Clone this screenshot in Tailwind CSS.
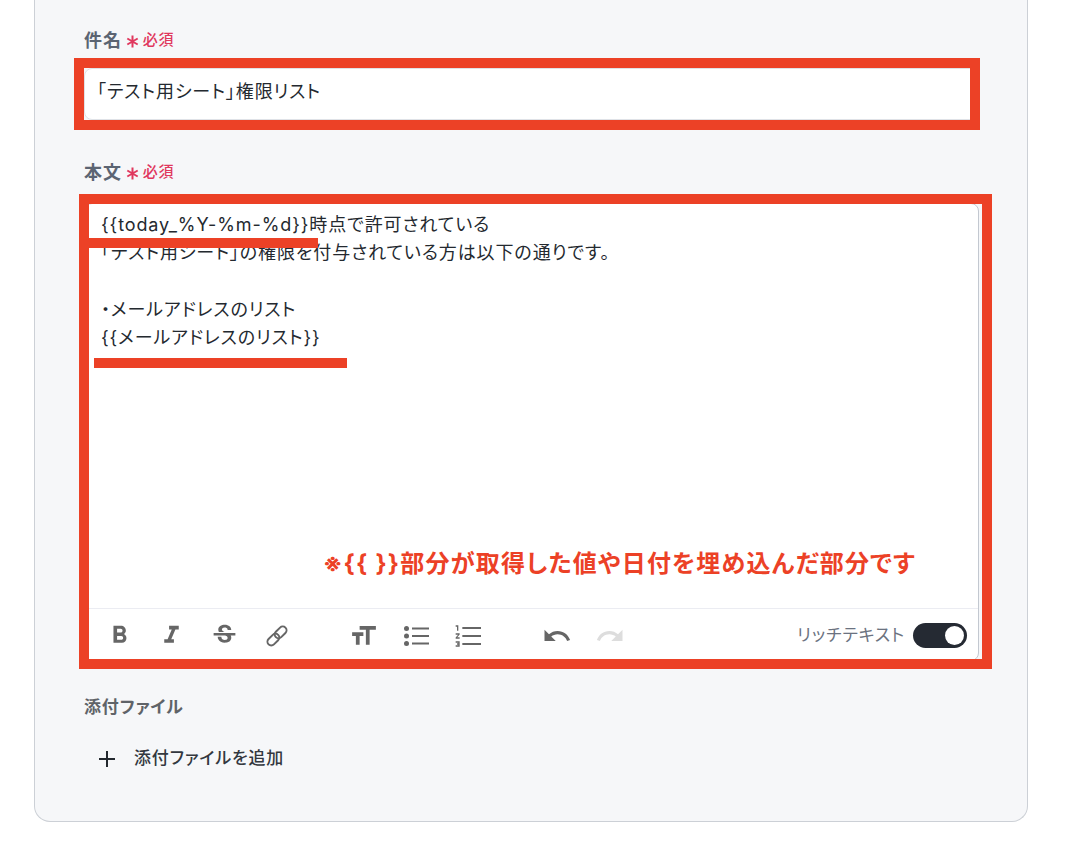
<!DOCTYPE html>
<html lang="ja">
<head>
    <meta charset="UTF-8">
    <meta name="viewport" content="width=device-width, initial-scale=1.0">
    <title>メール設定</title>
    <script src="https://cdn.jsdelivr.net/npm/@tailwindcss/browser@4"></script>
</head>
<body class="bg-white font-['Inter','Noto_Sans_CJK_JP',sans-serif] [font-feature-settings:'palt'] text-[#24292f]">

    <div class="relative w-[1086px] h-[858px] overflow-hidden">

        <!-- Form card -->
        <div class="ml-[34px] w-[994px] flex flex-col pl-[49px] pr-[48px] pt-[28px] pb-[42px] bg-[#f6f7f9] border-x border-b border-[#ccd0d6] rounded-b-2xl">

            <!-- Subject -->
            <div class="flex items-center h-[24px]">
                <span class="text-[18px] font-semibold tracking-[0.05em] text-[#5b6472]">件名</span>
                <svg class="ml-[4px] mt-[3px] w-[13px] h-[13px]" viewBox="0 0 13 13" fill="none" stroke="#e0385e" stroke-width="2"><path d="M6.500 0.500v12M1.300 3.500l10.400 6M1.300 9.500l10.400-6"/></svg>
                <span class="ml-[4px] text-[15px] font-medium tracking-[0.05em] text-[#e0385e]">必須</span>
            </div>
            <div class="mt-[16px] h-[52px] flex items-center pl-[12px] bg-white rounded-lg border border-[#dfe2e7] text-[18px] tracking-[0.05em] pb-[5px]">「テスト用シート」権限リスト</div>

            <!-- Body -->
            <div class="mt-[40px] flex items-center h-[24px]">
                <span class="text-[18px] font-semibold tracking-[0.05em] text-[#5b6472]">本文</span>
                <svg class="ml-[4px] mt-[3px] w-[13px] h-[13px]" viewBox="0 0 13 13" fill="none" stroke="#e0385e" stroke-width="2"><path d="M6.500 0.500v12M1.300 3.500l10.400 6M1.300 9.500l10.400-6"/></svg>
                <span class="ml-[4px] text-[15px] font-medium tracking-[0.05em] text-[#e0385e]">必須</span>
            </div>
            <div class="mt-[19px] h-[458px] flex flex-col bg-white rounded-lg border border-[#c3c8d0]">
                <div class="flex-1 pl-[16px] pt-[7px] text-[18px] leading-[28.25px] tracking-[0.05em]">
                    <p>{{today_%Y-%m-%d}}時点で許可されている</p>
                    <p>「テスト用シート」の権限を付与されている方は以下の通りです。</p>
                    <p class="h-[28.25px]"></p>
                    <p>・メールアドレスのリスト</p>
                    <p>{{メールアドレスのリスト}}</p>
                </div>

                <!-- Toolbar -->
                <div class="h-[52px] flex items-center pl-[8px] pr-[11px] pt-[2px] border-t border-[#ebecf2] text-[#666666]">
                    <button class="w-[52.6px] flex justify-center">
                        <svg class="w-[29px] h-[29px]" viewBox="0 0 24 24" fill="currentColor"><path d="M15.6 10.79c.97-.67 1.65-1.77 1.65-2.79 0-2.26-1.75-4-4-4H7v14h7.04c2.09 0 3.71-1.7 3.71-3.79 0-1.52-.86-2.82-2.15-3.42zM10 6.5h3c.83 0 1.5.67 1.5 1.5s-.67 1.5-1.5 1.5h-3v-3zm3.5 9H10v-3h3.5c.83 0 1.5.67 1.5 1.5s-.67 1.5-1.5 1.5z"/></svg>
                    </button>
                    <button class="w-[52.6px] flex justify-center">
                        <svg class="w-[29px] h-[29px]" viewBox="0 0 24 24" fill="currentColor"><path d="M10 4v3h2.21l-3.42 8H6v3h8v-3h-2.21l3.42-8H18V4z"/></svg>
                    </button>
                    <button class="w-[52.6px] flex justify-center">
                        <svg class="w-[29px] h-[29px]" viewBox="0 0 24 24" fill="currentColor"><path d="M6.85 7.08C6.85 4.37 9.45 3 12.24 3c1.64 0 3 .49 3.9 1.28.77.65 1.46 1.73 1.46 3.24h-3.01c0-.31-.05-.59-.15-.85-.29-.86-1.2-1.28-2.25-1.28-1.86 0-2.34 1.02-2.34 1.7 0 .48.25.88.74 1.21.38.25.77.48 1.41.7H7.39c-.21-.34-.54-.89-.54-1.92zM21 12v-2H3v2h9.62c1.15.45 1.96.75 1.96 1.97 0 1-.81 1.67-2.28 1.67-1.54 0-2.93-.54-2.93-2.51H6.4c0 .55.08 1.13.24 1.58.81 2.29 3.29 3.3 5.67 3.3 2.27 0 5.3-.89 5.3-4.05 0-.3-.01-1.16-.48-1.96H21z"/></svg>
                    </button>
                    <button class="w-[52.6px] flex justify-center">
                        <svg class="w-[26px] h-[26px]" viewBox="0 0 24 24" fill="none" stroke="currentColor" stroke-width="1.800"><g transform="rotate(-45 12 12)"><rect x="1" y="8.500" width="12.500" height="7" rx="3.500"/><rect x="10.500" y="8.500" width="12.500" height="7" rx="3.500"/></g></svg>
                    </button>
                    <button class="ml-[34px] w-[52.6px] flex justify-center">
                        <svg class="w-[30px] h-[30px]" viewBox="0 0 24 24" fill="currentColor"><path transform="matrix(-1 0 0 1 24 0)" d="M2.5 4v3h5v12h3V7h5V4h-13zm19 5h-9v3h3v7h3v-7h3V9z"/></svg>
                    </button>
                    <button class="w-[52.6px] flex justify-center">
                        <svg class="w-[25px] h-[20px]" viewBox="0 0 25 20" fill="currentColor"><circle cx="2.500" cy="2.500" r="2.500"/><circle cx="2.500" cy="10" r="2.500"/><circle cx="2.500" cy="17.500" r="2.500"/><rect x="8" y="1.500" width="17" height="2"/><rect x="8" y="9" width="17" height="2"/><rect x="8" y="16.500" width="17" height="2"/></svg>
                    </button>
                    <button class="w-[52.6px] flex justify-center">
                        <svg class="w-[32px] h-[32px]" viewBox="0 0 24 24" fill="currentColor"><path d="M2 17h2v.5H3v1h1v.5H2v1h3v-4H2v1zm1-9h1V4H2v1h1v3zm-1 3h1.800L2 13.100v.9h3v-1H3.200L5 10.900V10H2v1zm5-5.750v1.500h14v-1.500H7zm0 13.500h14v-1.500H7v1.500zm0-6h14v-1.500H7v1.500z"/></svg>
                    </button>
                    <button class="ml-[36px] w-[52.6px] flex justify-center">
                        <svg class="w-[30px] h-[30px]" viewBox="0 0 24 24" fill="currentColor"><path d="M12.500 8c-2.650 0-5.050.99-6.900 2.600L2 7v9h9l-3.620-3.620c1.390-1.160 3.160-1.880 5.120-1.880 3.540 0 6.550 2.310 7.600 5.500l2.370-.78C21.080 11.030 17.150 8 12.500 8z"/></svg>
                    </button>
                    <button class="w-[52.6px] flex justify-center text-[#dddddd]">
                        <svg class="w-[30px] h-[30px]" viewBox="0 0 24 24" fill="currentColor"><path d="M18.400 10.600C16.550 8.990 14.150 8 11.500 8c-4.650 0-8.580 3.030-9.960 7.220L3.900 16c1.050-3.190 4.050-5.500 7.600-5.500 1.950 0 3.730.72 5.120 1.880L13 16h9V7l-3.600 3.600z"/></svg>
                    </button>

                    <!-- Rich text toggle -->
                    <span class="ml-auto text-[17px] tracking-[0.05em] text-[#6b7280]">リッチテキスト</span>
                    <span class="ml-[8px] w-[54px] h-[25px] flex items-center justify-end pr-[3px] rounded-full bg-[#252a33]">
                        <span class="w-[19px] h-[19px] rounded-full bg-white"></span>
                    </span>
                </div>
            </div>

            <!-- Attachments -->
            <div class="mt-[35px] h-[24px] flex items-center text-[17px] font-semibold tracking-[0.05em] text-[#5f6368]">添付ファイル</div>
            <button class="mt-[19px] h-[40px] flex items-center pl-[14px] text-[17px] font-medium tracking-[0.05em] text-[#33383f]">
                <svg class="w-[18px] h-[18px]" viewBox="0 0 18 18" fill="none" stroke="#24292f" stroke-width="2"><path d="M9 1v16M1 9h16"/></svg>
                <span class="ml-[18px]">添付ファイルを追加</span>
            </button>
        </div>

        <!-- Red annotations over the form -->
        <div class="absolute left-[74px] top-[58px] w-[906px] h-[72px] border-[10px] border-[#ec4126]"></div>
        <div class="absolute left-[79px] top-[194px] w-[913px] h-[475px] border-[10px] border-[#ec4126]"></div>
        <div class="absolute left-[89px] top-[238px] w-[229px] h-[10px] bg-[#ec4126]"></div>
        <div class="absolute left-[94px] top-[358px] w-[253px] h-[10px] bg-[#ec4126]"></div>
        <div class="absolute left-[323px] top-[546px] text-[24px] leading-[36px] font-bold tracking-[0.05em] text-[#ec4126] whitespace-nowrap">※{{ }}部分が取得した値や日付を埋め込んだ部分です</div>
    </div>

</body>
</html>
